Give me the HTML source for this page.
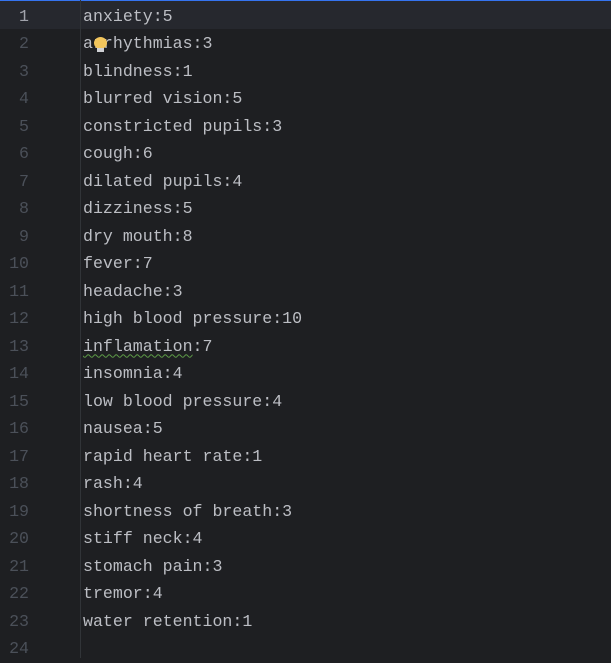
<!DOCTYPE html>
<html><head><style>
body{margin:0;width:611px;height:658px;background:#1e1f22;overflow:hidden;position:relative;font-family:"Liberation Mono",monospace;font-size:16.6px;}
.top{position:absolute;left:0;top:0;width:611px;height:1px;background:#3574f0;}
.cur{position:absolute;left:0;top:1px;width:611px;height:28px;background:#26282e;}
.sep{position:absolute;left:80px;top:0;width:1px;height:658px;background:#313438;}
.g{position:absolute;left:0;top:2.5px;width:29px;text-align:right;color:#4b5059;}
.t{position:absolute;left:83px;top:2.5px;color:#bcbec4;white-space:pre;}
.g div,.t div{height:27.5px;line-height:27.5px;}
.g div:first-child{color:#a1a3ab;}
.sq{text-decoration:underline wavy #5d9b47;text-decoration-thickness:1px;text-underline-offset:3px;}
.bulb{position:absolute;left:94px;top:37px;width:13px;height:12px;border-radius:50%;background:#f2c55c;}
.bulb2{position:absolute;left:97px;top:48px;width:7px;height:4px;background:#cfd0d4;}
</style></head><body>
<div class="top"></div><div class="cur"></div><div class="sep"></div>
<div class="g"><div>1</div><div>2</div><div>3</div><div>4</div><div>5</div><div>6</div><div>7</div><div>8</div><div>9</div><div>10</div><div>11</div><div>12</div><div>13</div><div>14</div><div>15</div><div>16</div><div>17</div><div>18</div><div>19</div><div>20</div><div>21</div><div>22</div><div>23</div><div>24</div></div>
<div class="t"><div>anxiety:5</div><div>arrhythmias:3</div><div>blindness:1</div><div>blurred vision:5</div><div>constricted pupils:3</div><div>cough:6</div><div>dilated pupils:4</div><div>dizziness:5</div><div>dry mouth:8</div><div>fever:7</div><div>headache:3</div><div>high blood pressure:10</div><div><span class="sq">inflamation</span>:7</div><div>insomnia:4</div><div>low blood pressure:4</div><div>nausea:5</div><div>rapid heart rate:1</div><div>rash:4</div><div>shortness of breath:3</div><div>stiff neck:4</div><div>stomach pain:3</div><div>tremor:4</div><div>water retention:1</div><div></div></div>
<div class="bulb"></div><div class="bulb2"></div>
</body></html>
